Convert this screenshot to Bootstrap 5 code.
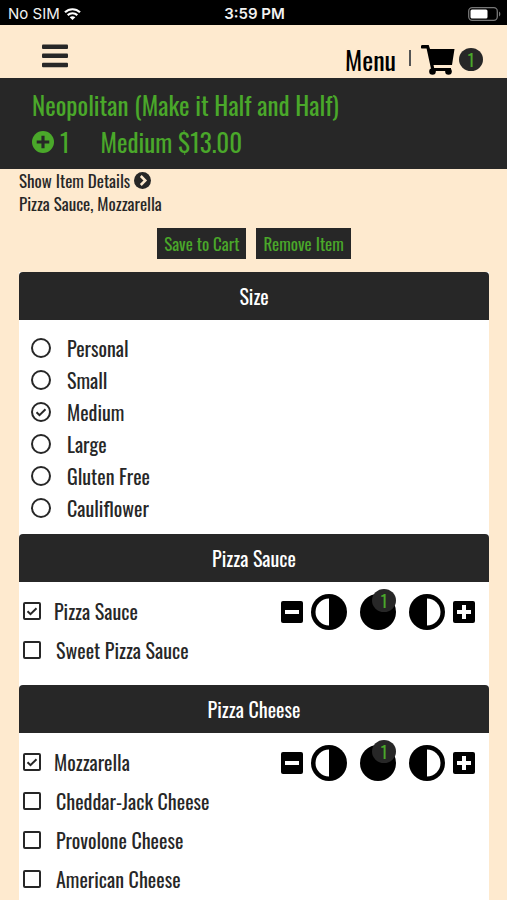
<!DOCTYPE html>
<html lang="en">
<head>
<meta charset="utf-8">
<meta name="viewport" content="width=device-width, initial-scale=1">
<title>Build your pizza</title>
<link href="https://cdn.jsdelivr.net/npm/bootstrap@5.3.0/dist/css/bootstrap.min.css" rel="stylesheet">
<style>
  :root { --ink: #272727; --leaf: #4aa82a; --cream: #feeacf; }
  body { background: var(--cream); color: var(--ink); font-family: Oswald, "Roboto Condensed", "Liberation Sans Narrow", "Liberation Sans", sans-serif; font-size: 20px; font-weight: 400; line-height: 24px; }
  svg { display: block; flex: none; }
  button { font: inherit; }
  .icon-btn { border: 0; padding: 0; background: none; color: #000; display: block; }
  .status-bar { display: grid; grid-template-columns: 1fr auto 1fr; background: #000; color: #f2f2f2; height: 25px; padding: 2px 6px 0 8px; font: 15px/24px Inter, sans-serif; }
  .top-nav { height: 53px; padding: 0 24px 0 42px; }
  .menu-link { color: #000; font-size: 26px; line-height: 36px; }
  .nav-rule { width: 2px; height: 16px; margin: 0 10px 4px 13px; background: #555; }
  .count { display: flex; align-items: center; justify-content: center; width: 24px; height: 23px; border-radius: 50%; background: var(--ink); color: var(--leaf); font-size: 17px; line-height: 23px; }
  .item-head { background: var(--ink); color: var(--leaf); height: 91px; padding: 8px 32px; font-size: 25px; line-height: 37px; }
  .item-head h1 { font-size: 25px; line-height: 37px; font-weight: 400; }
  .qty { margin: 0 31px 0 6px; }
  .page-body { padding: 0 18px 0 19px; }
  .details { font-size: 17px; line-height: 23px; }
  .actions { padding: 13px 0; gap: 10px; }
  .act { background: var(--ink); color: var(--leaf); border-radius: 0; border: 0; padding: 0 7px; font-size: 17px; line-height: 31px; }
  .panel { background: #fff; }
  .panel h2 { background: var(--ink); color: #fff; border-radius: 4px 4px 0 0; font-size: 20px; line-height: 48px; font-weight: 400; text-align: center; }
  .sizes { padding: 12px 12px 10px; }
  .size-row { height: 32px; gap: 16px; }
  .toppings { padding: 9px 14px 16px 4px; }
  .top-row { height: 39px; }
  .top-row label { padding-left: 15px; }
  .top-row input:checked + label { padding-left: 13px; }
  .pick { appearance: none; flex: none; margin: 0; width: 18px; height: 18px; border: 2px solid var(--ink); border-radius: 2px; background: #fff center / 14px 14px no-repeat; }
  .pick[type=radio] { width: 20px; height: 20px; border-radius: 50%; }
  .pick:checked { background-image: url("data:image/svg+xml,%3Csvg xmlns='http://www.w3.org/2000/svg' viewBox='0 0 14 14'%3E%3Cpath d='M2.5 7.2l3 3 6-6' fill='none' stroke='%23272727' stroke-width='2'/%3E%3C/svg%3E"); }
  .portion { gap: 8px; padding-top: 3px; }
  .thirds { gap: 13px; }
  .whole { position: relative; }
  .whole .count { position: absolute; top: -5px; right: 0; }
</style>
<script src="https://cdn.jsdelivr.net/npm/bootstrap@5.3.0/dist/js/bootstrap.bundle.min.js"></script>
</head>
<body class="min-vh-100 d-flex flex-column">
<svg class="d-none" aria-hidden="true">
  <symbol id="minus" viewBox="0 0 22 22"><rect width="22" height="22" rx="2"/><path d="M4 9h14v4H4z" fill="#fff"/></symbol>
  <symbol id="plus" viewBox="0 0 22 22"><rect width="22" height="22" rx="2"/><path d="M4 9h5V4h4v5h5v4h-5v5H9v-5H4z" fill="#fff"/></symbol>
  <symbol id="half" viewBox="0 0 36 36"><circle cx="18" cy="18" r="18"/><path d="M18 4.500a13.500 13.500 0 0 0 0 27z" fill="#fff"/></symbol>
  <symbol id="half-right" viewBox="0 0 36 36"><circle cx="18" cy="18" r="18"/><path d="M18 4.500a13.500 13.500 0 0 1 0 27z" fill="#fff"/></symbol>
  <symbol id="full" viewBox="0 0 36 36"><circle cx="18" cy="18" r="18"/></symbol>
</svg>

<div class="status-bar">
  <div class="d-flex align-items-center gap-1"><span>No SIM</span>
    <svg width="17" height="12" viewBox="0 0 17 12" fill="none" stroke="#fff" stroke-width="2.200"><path d="M1 4.300C5.200.2 11.800.2 16 4.300M3.700 7.100c2.700-2.500 6.900-2.500 9.600 0"/><path d="M8.500 12L5.700 9.200c1.600-1.400 4-1.400 5.600 0z" fill="#fff" stroke="none"/></svg>
  </div>
  <div class="fw-semibold">3:59 PM</div>
  <div class="d-flex align-items-center justify-content-end">
    <svg width="33" height="14" viewBox="0 0 33 14"><rect x=".7" y=".7" width="28.600" height="12.600" rx="3.500" fill="none" stroke="#777" stroke-width="1.300"/><rect x="2.500" y="2.500" width="17" height="9" rx="1.500" fill="#fff"/><path d="M31 4.500c1.800.8 1.800 4.200 0 5z" fill="#777"/></svg>
  </div>
</div>

<nav class="top-nav d-flex align-items-center justify-content-between" aria-label="Main">
  <button class="icon-btn pt-2" type="button" aria-label="Open menu">
    <svg width="27" height="24" viewBox="0 0 27 24" fill="#272727"><rect y=".5" width="26" height="4.500" rx="1"/><rect y="9.600" width="26" height="4.500" rx="1"/><rect y="18.700" width="26" height="4.500" rx="1"/></svg>
  </button>
  <div class="d-flex align-items-center pt-3">
    <a class="menu-link text-decoration-none" href="#">Menu</a>
    <span class="nav-rule"></span>
    <a class="d-flex align-items-center text-decoration-none gap-1" href="#" aria-label="Cart">
      <svg width="34" height="30" viewBox="0 0 34 30"><path d="M1.500 0h6.200L9 4h24.500L31 20H12.500l.7 3H30v3H10.500L5.600 3.600H1.500a1.800 1.800 0 0 1 0-3.600z"/><circle cx="11.500" cy="26.500" r="3.300"/><circle cx="27.500" cy="26.500" r="3.300"/></svg>
      <span class="count">1</span>
    </a>
  </div>
</nav>

<header class="item-head">
  <h1 class="m-0">Neopolitan (Make it Half and Half)</h1>
  <div class="d-flex align-items-center">
    <button class="icon-btn" type="button" aria-label="Add one"><svg width="22" height="22" viewBox="0 0 21 21"><circle cx="10.500" cy="10.500" r="10.500" fill="#4aa82a"/><path d="M4.500 9h4.500V4.500h3V9h4.500v3H12v4.500H9V12H4.500z" fill="#272727"/></svg></button>
    <span class="qty">1</span><span>Medium $13.00</span>
  </div>
</header>

<main class="page-body flex-grow-1 d-flex flex-column">
  <div class="details">
    <a class="d-flex align-items-center gap-1 text-reset text-decoration-none" href="#">Show Item Details
      <svg width="17" height="17" viewBox="0 0 17 17"><circle cx="8.500" cy="8.500" r="8.500" fill="#272727"/><path d="M6.800 4l4.500 4.500L6.800 13" fill="none" stroke="#feeacf" stroke-width="2.500"/></svg></a>
    <div>Pizza Sauce, Mozzarella</div>
  </div>
  <div class="actions d-flex justify-content-center">
    <button class="act" type="button">Save to Cart</button>
    <button class="act" type="button">Remove Item</button>
  </div>

  <section class="panel">
    <h2 class="m-0">Size</h2>
    <div class="sizes">
      <div class="size-row d-flex align-items-center"><input class="pick" type="radio" name="size" id="s1"><label for="s1">Personal</label></div>
      <div class="size-row d-flex align-items-center"><input class="pick" type="radio" name="size" id="s2"><label for="s2">Small</label></div>
      <div class="size-row d-flex align-items-center"><input class="pick" type="radio" name="size" id="s3" checked><label for="s3">Medium</label></div>
      <div class="size-row d-flex align-items-center"><input class="pick" type="radio" name="size" id="s4"><label for="s4">Large</label></div>
      <div class="size-row d-flex align-items-center"><input class="pick" type="radio" name="size" id="s5"><label for="s5">Gluten Free</label></div>
      <div class="size-row d-flex align-items-center"><input class="pick" type="radio" name="size" id="s6"><label for="s6">Cauliflower</label></div>
    </div>
  </section>

  <section class="panel">
    <h2 class="m-0">Pizza Sauce</h2>
    <div class="toppings">
      <div class="top-row d-flex align-items-center"><input class="pick" type="checkbox" id="t1" checked><label for="t1">Pizza Sauce</label>
        <div class="portion d-flex align-items-center ms-auto">
          <button class="icon-btn" type="button" aria-label="Less"><svg width="22" height="22"><use href="#minus"/></svg></button>
          <div class="thirds d-flex">
            <button class="icon-btn" type="button" aria-label="Left half"><svg width="36" height="36"><use href="#half"/></svg></button>
            <button class="icon-btn whole" type="button" aria-label="Whole"><svg width="36" height="36"><use href="#full"/></svg><span class="count">1</span></button>
            <button class="icon-btn" type="button" aria-label="Right half"><svg width="36" height="36"><use href="#half-right"/></svg></button>
          </div>
          <button class="icon-btn" type="button" aria-label="More"><svg width="22" height="22"><use href="#plus"/></svg></button>
        </div>
      </div>
      <div class="top-row d-flex align-items-center"><input class="pick" type="checkbox" id="t2"><label for="t2">Sweet Pizza Sauce</label></div>
    </div>
  </section>

  <section class="panel flex-grow-1">
    <h2 class="m-0">Pizza Cheese</h2>
    <div class="toppings pb-0">
      <div class="top-row d-flex align-items-center"><input class="pick" type="checkbox" id="c1" checked><label for="c1">Mozzarella</label>
        <div class="portion d-flex align-items-center ms-auto">
          <button class="icon-btn" type="button" aria-label="Less"><svg width="22" height="22"><use href="#minus"/></svg></button>
          <div class="thirds d-flex">
            <button class="icon-btn" type="button" aria-label="Left half"><svg width="36" height="36"><use href="#half"/></svg></button>
            <button class="icon-btn whole" type="button" aria-label="Whole"><svg width="36" height="36"><use href="#full"/></svg><span class="count">1</span></button>
            <button class="icon-btn" type="button" aria-label="Right half"><svg width="36" height="36"><use href="#half-right"/></svg></button>
          </div>
          <button class="icon-btn" type="button" aria-label="More"><svg width="22" height="22"><use href="#plus"/></svg></button>
        </div>
      </div>
      <div class="top-row d-flex align-items-center"><input class="pick" type="checkbox" id="c2"><label for="c2">Cheddar-Jack Cheese</label></div>
      <div class="top-row d-flex align-items-center"><input class="pick" type="checkbox" id="c3"><label for="c3">Provolone Cheese</label></div>
      <div class="top-row d-flex align-items-center"><input class="pick" type="checkbox" id="c4"><label for="c4">American Cheese</label></div>
    </div>
  </section>
</main>
</body>
</html>
